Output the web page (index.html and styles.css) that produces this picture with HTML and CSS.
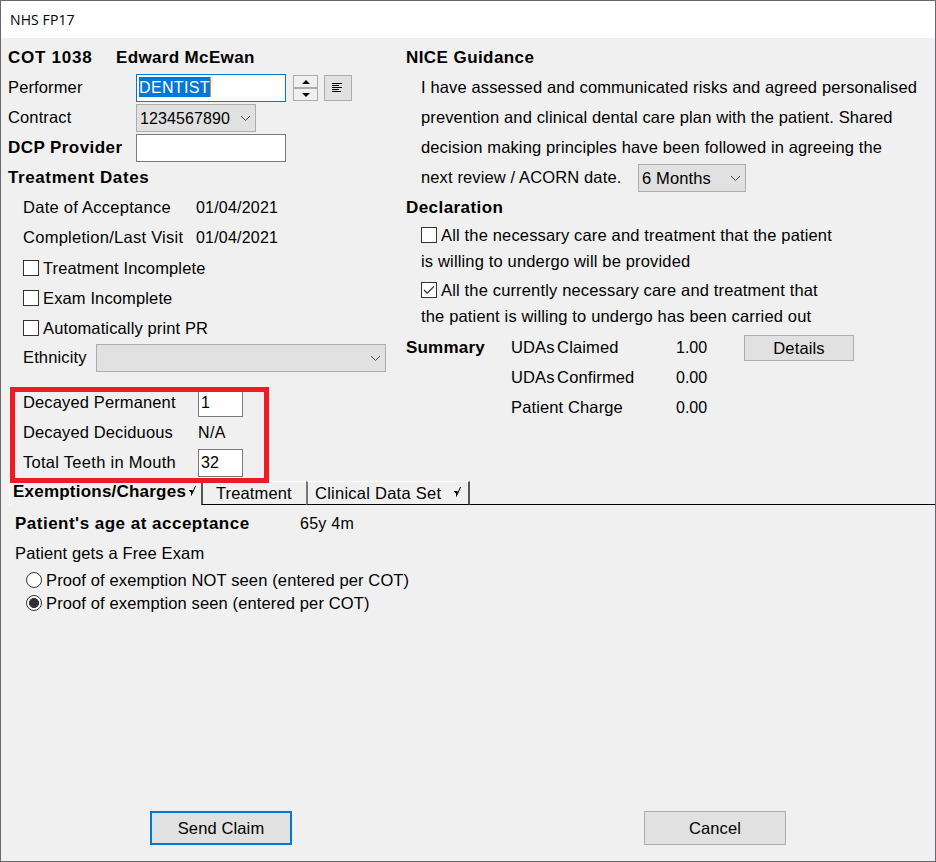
FILE: index.html
```html
<!DOCTYPE html>
<html lang="en">
<head>
<meta charset="utf-8">
<title>NHS FP17</title>
<link rel="stylesheet" href="styles.css">
</head>
<body>
<div class="window">
  <header class="titlebar">NHS FP17</header>
  <main class="client">
    <div class="columns">
      <section class="left">
        <div class="row"><b class="cot">COT 1038</b><b class="name">Edward McEwan</b></div>
        <div class="row">
          <span class="label">Performer</span>
          <div class="input wide focused"><span class="selected">DENTIST</span></div>
          <div class="spinner">
            <span class="spin"><svg width="8" height="4" viewBox="0 0 8 4"><path d="M4 0L8 4H0z"/></svg></span>
            <span class="spin"><svg width="8" height="4" viewBox="0 0 8 4"><path d="M0 0H8L4 4z"/></svg></span>
          </div>
          <div class="iconbtn"><svg width="10" height="10" viewBox="0 0 10 10" shape-rendering="crispEdges"><path d="M0 .5H10M0 2.5H7M0 4.5H10M0 6.5H7M0 8.5H9" stroke="#000"/></svg></div>
        </div>
        <div class="row">
          <span class="label">Contract</span>
          <div class="select contract"><span class="digits">1234567890</span><svg width="11" height="7" viewBox="0 0 11 7"><path d="M1 1l4.5 4.5L10 1"/></svg></div>
        </div>
        <div class="row"><b class="label">DCP Provider</b><div class="input wide"></div></div>
        <div class="row"><b class="dates">Treatment Dates</b></div>
        <div class="row indent"><span class="datelabel">Date of Acceptance</span><span class="date">01/04/2021</span></div>
        <div class="row indent"><span class="datelabel">Completion/Last Visit</span><span class="date">01/04/2021</span></div>
        <div class="row indent option"><i class="check"></i><span>Treatment Incomplete</span></div>
        <div class="row indent option"><i class="check"></i><span>Exam Incomplete</span></div>
        <div class="row indent option"><i class="check"></i><span>Automatically print PR</span></div>
        <div class="row indent">
          <span class="ethlabel">Ethnicity</span>
          <div class="select ethnicity"><svg width="11" height="7" viewBox="0 0 11 7"><path d="M1 1l4.5 4.5L10 1"/></svg></div>
        </div>
        <div class="teeth">
          <div class="row"><span class="teethlabel">Decayed Permanent</span><div class="input small">1</div></div>
          <div class="row"><span class="teethlabel">Decayed Deciduous</span><span class="na">N/A</span></div>
          <div class="row"><span class="teethlabel total">Total Teeth in Mouth</span><div class="input small">32</div></div>
          <div class="highlight"></div>
        </div>
      </section>
      <section class="right">
        <div class="row"><b>NICE Guidance</b></div>
        <div class="row indent">I have assessed and communicated risks and agreed personalised</div>
        <div class="row indent">prevention and clinical dental care plan with the patient. Shared</div>
        <div class="row indent">decision making principles have been followed in agreeing the</div>
        <div class="row indent"><span class="review">next review / ACORN date.</span>
          <div class="select months"><span>6 Months</span><svg width="11" height="7" viewBox="0 0 11 7"><path d="M1 1l4.5 4.5L10 1"/></svg></div>
        </div>
        <div class="row"><b>Declaration</b></div>
        <div class="declare">
          <div class="line"><i class="check"></i><span>All the necessary care and treatment that the patient</span></div>
          <div class="line">is willing to undergo will be provided</div>
        </div>
        <div class="declare">
          <div class="line"><i class="check"><svg width="14" height="14" viewBox="0 0 14 14"><path d="M2 7l3.2 3.2L12 3.4"/></svg></i><span>All the currently necessary care and treatment that</span></div>
          <div class="line">the patient is willing to undergo has been carried out</div>
        </div>
        <div class="row"><b class="sum">Summary</b><span class="sumlabel udas">UDAs Claimed</span><span class="amount">1.00</span><div class="button details">Details</div></div>
        <div class="row"><b class="sum"></b><span class="sumlabel udas">UDAs Confirmed</span><span class="amount">0.00</span></div>
        <div class="row"><b class="sum"></b><span class="sumlabel">Patient Charge</span><span class="amount">0.00</span></div>
      </section>
    </div>
    <nav class="tabs">
      <div class="tab active"><b>Exemptions/Charges</b><svg width="7" height="10" viewBox="0 0 7 10"><path d="M6.5 0L3 8M0 4.5H3.5M1 5.5H4M2.5 4V9.5"/></svg></div>
      <div class="tab treatment">Treatment</div>
      <div class="tab clinical"><span>Clinical Data Set</span><svg width="7" height="10" viewBox="0 0 7 10"><path d="M6.5 0L3 8M0 4.5H3.5M1 5.5H4M2.5 4V9.5"/></svg></div>
      <div class="rest"></div>
    </nav>
    <section class="pane">
      <div class="row"><b class="age">Patient's age at acceptance</b><span class="agevalue">65y 4m</span></div>
      <div class="row">Patient gets a Free Exam</div>
      <div class="proof"><i class="radio"></i><span>Proof of exemption NOT seen (entered per COT)</span></div>
      <div class="proof"><i class="radio on"></i><span>Proof of exemption seen (entered per COT)</span></div>
    </section>
    <footer class="actions"><div class="button primary">Send Claim</div><div class="button">Cancel</div></footer>
  </main>
</div>
</body>
</html>
```
FILE: styles.css
```css
* { box-sizing: border-box; }
html, body { margin: 0; height: 100%; overflow: hidden; }
body { font: 16.5px/31px "Liberation Sans", Arial, sans-serif; letter-spacing: .13px; color: #000; white-space: nowrap; }
b { font-size: 17px; letter-spacing: .43px; }
svg { flex: none; fill: none; stroke: #444; }
.window {
  width: 936px; height: 862px; padding: 1px; display: flex; flex-direction: column;
  background: #69696b;
}
.titlebar { height: 37px; padding: 0 9px; background: #fff; font: 14px/38px "Open Sans", sans-serif; letter-spacing: .1px; }
.client { flex: 1; display: flex; flex-direction: column; background: #f0f0f0; padding-top: 4px; }
.columns { display: grid; grid-template-columns: 398px 1fr; height: 438px; }
.left { padding-left: 7px; }
.right { padding-left: 7px; }
.row { display: flex; height: 30px; }
.indent { padding-left: 15px; }
.cot { width: 108px; letter-spacing: .75px; }
.name { letter-spacing: .35px; }
.dates { letter-spacing: .6px; }
.label { width: 128px; }
.input { height: 28px; margin-top: 2px; border: 1px solid #7a7a7a; background: #fff; font-size: 16px; line-height: 25px; padding-left: 2px; letter-spacing: 0; }
.wide { width: 150px; }
.focused { border-color: #0078d7; }
.selected { display: block; width: 72px; height: 20px; margin-top: 2px; line-height: 21px; background: #0078d7; color: #fff; border-right: 1px solid #ff8728; letter-spacing: .35px; }
.small { width: 45px; }
.spinner { width: 25px; margin: 3px 6px 0 7px; height: 26px; display: grid; grid-template-rows: 1fr 1fr; }
.spin { display: flex; align-items: center; justify-content: center; border: 1px solid #acacac; background: #f0f0f0; }
.spin svg { fill: #000; stroke: none; }
.iconbtn { width: 28px; height: 26px; margin-top: 3px; border: 1px solid #adadad; background: #e1e1e1; display: flex; align-items: center; justify-content: center; padding-right: 2px; }
.select { height: 28px; margin-top: 2px; border: 1px solid #adadad; background: #e1e1e1; display: flex; align-items: center; justify-content: space-between; padding: 0 4px 0 3px; line-height: 27px; }
.contract { width: 120px; }
.digits { font-size: 16px; letter-spacing: .1px; }
.ethnicity { width: 290px; justify-content: flex-end; }
.ethlabel { width: 73px; }
.datelabel { width: 173px; letter-spacing: .27px; }
.date { font-size: 16px; letter-spacing: .2px; }
.option { align-items: center; line-height: 33px; gap: 4px; }
.option span { padding-top: 2px; }
.check { flex: none; display: block; width: 16px; height: 16px; border: 1px solid #333; background: #fff; }
.option .check { margin-top: 2px; }
.check svg { display: block; stroke: #333; stroke-width: 1.3; }
.teeth { position: relative; padding: 15px 0 0 15px; }
.teethlabel { width: 175px; }
.total { letter-spacing: .28px; }
.na { font-size: 16px; letter-spacing: .4px; }
.highlight { position: absolute; left: 2px; top: 15px; width: 259px; height: 96px; border: 5px solid #ed1c24; z-index: 1; }
.review { width: 217px; }
.months { width: 108px; }
.declare { padding-left: 15px; margin-bottom: 3px; line-height: 26px; letter-spacing: .16px; }
.line { display: flex; height: 26px; gap: 4px; align-items: center; }
.sum { width: 105px; letter-spacing: .2px; }
.sumlabel { width: 165px; }
.udas { word-spacing: -2.2px; }
.amount { width: 68px; font-size: 16px; letter-spacing: 0; }
.button { display: flex; align-items: center; justify-content: center; background: #e1e1e1; border: 1px solid #adadad; width: 142px; height: 34px; }
.details { width: 110px; height: 26px; margin-top: 3px; }
.tabs { display: flex; height: 24px; padding-left: 8px; line-height: 23px; margin: 1px 0 1px; }
.tab { display: flex; border-top: 1px solid #fff; }
.active { width: 192px; height: 25px; border-left: 1px solid #fff; padding-left: 3px; line-height: 20px; }
.active b { letter-spacing: .22px; width: 176px; }
.tab svg { stroke: #000; margin-top: 4px; }
.treatment { width: 105px; padding-left: 13px; border-left: 2px solid #555; border-bottom: 1px solid #000; }
.clinical { width: 164px; padding-left: 7px; border-left: 2px solid #777; border-right: 2px solid #555; border-bottom: 1px solid #000; }
.clinical span { width: 139px; letter-spacing: .25px; }
.clinical svg { margin-top: 5px; }
.rest { flex: 1; border-bottom: 1px solid #000; }
.pane { padding: 2px 0 0 14px; flex: 1; }
.age { width: 285px; letter-spacing: .49px; }
.agevalue { font-size: 16px; letter-spacing: .25px; }
.proof { height: 23px; display: flex; align-items: center; gap: 4px; padding-left: 11px; }
.proof span { padding-top: 2px; }
.radio { width: 16px; height: 16px; border: 1px solid #333; border-radius: 50%; background: #fff; }
.on { background: radial-gradient(circle, #333 0 4.7px, #fff 5.3px); }
.actions { display: flex; justify-content: space-between; padding: 0 149px; height: 50px; }
.primary { border: 2px solid #0078d7; }
```
